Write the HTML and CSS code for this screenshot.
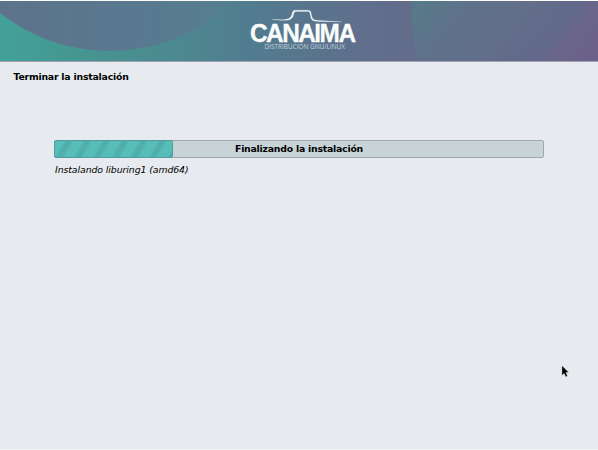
FILE: index.html
```html
<!DOCTYPE html>
<html lang="es">
<head>
<meta charset="utf-8">
<title>Canaima</title>
<link rel="stylesheet" href="styles.css">
</head>
<body>
<header class="banner">
<svg class="banner-art" width="598" height="60" viewBox="0 1 598 60">
<defs>
<linearGradient id="base" x1="0" x2="1"><stop offset="0" stop-color="#43a19a"/><stop offset=".13" stop-color="#459690"/><stop offset=".3" stop-color="#4d8890"/><stop offset=".42" stop-color="#517c8f"/><stop offset=".55" stop-color="#5c728c"/><stop offset=".68" stop-color="#636c8b"/><stop offset="1" stop-color="#636c8b"/></linearGradient>
<linearGradient id="disc" gradientUnits="userSpaceOnUse" x1="0" y1="0" x2="240" y2="0"><stop offset="0" stop-color="#5d738a"/><stop offset=".5" stop-color="#59788f"/><stop offset="1" stop-color="#567f91"/></linearGradient>
<linearGradient id="right" gradientUnits="userSpaceOnUse" x1="430" y1="-10" x2="560" y2="100"><stop offset="0" stop-color="#577a8a"/><stop offset=".25" stop-color="#60718a"/><stop offset=".5" stop-color="#626e8a"/><stop offset=".72" stop-color="#62698a"/><stop offset=".83" stop-color="#6b658a"/><stop offset="1" stop-color="#6b6189"/></linearGradient>
</defs>
<rect y="1" width="598" height="60" fill="url(#base)"/>
<circle cx="110" cy="-127" r="178" fill="url(#disc)"/>
<path d="M412 1Q410 32 418 61H598V1Z" fill="url(#right)"/>
<path class="tepui" d="M272 19.300C283 20.300 289.500 20 291.300 16C292.500 12 292.500 10.200 296 10.200H307.500C311.500 10.200 311 13 312 17C313 20 315 20.300 320 20.600L342 21.800L320 21.500C314 21.300 311.500 21 310.700 17C310 13 310 11.500 307.500 11.500H296.500C294 11.500 294 13 293 16.500C291 21.300 283 20.800 272 19.300Z"/>
<text class="brand" x="250" y="42" textLength="104.500" lengthAdjust="spacingAndGlyphs">CANAIMA</text>
<text class="tagline" x="264.500" y="48.500" textLength="80.500" lengthAdjust="spacingAndGlyphs">DISTRIBUCIÓN GNU/LINUX</text>
</svg>
</header>
<main class="content">
<h1 class="title">Terminar la instalación</h1>
<section class="progress">
<div class="bar"><div class="fill"></div><span class="label">Finalizando la instalación</span></div>
<p class="status">Instalando liburing1 (amd64)</p>
</section>
</main>
<svg class="pointer" width="9" height="13" viewBox="0 0 9 13"><path d="M.9 .5V10.500L3.100 8.500L4.900 12L6.500 11L5 7.500H7.900Z" fill="#000" stroke="#f7f9fa" stroke-width=".4"/></svg>
</body>
</html>
```
FILE: styles.css
```css
* { box-sizing: border-box; }
body {
  margin: 0;
  height: 450px;
  overflow: hidden;
  background: #e7ebef;
  color: #000;
  font-family: "DejaVu Sans", sans-serif;
  font-size: 9.33px;
  border-top: 1px solid #fbfcfc;
  border-bottom: 1px solid #f2f3f4;
}
.banner { height: 61px; border-bottom: 1px solid #a09fb4; }
.banner-art { display: block; }
.tepui { fill: #f5f9fa; stroke: #f5f9fa; stroke-width: .2; }
.brand {
  font: bold 25.5px "Liberation Sans", sans-serif;
  letter-spacing: -1.6px;
  fill: #fafcfc;
  stroke: #fafcfc;
  stroke-width: .3;
}
.tagline {
  font: 6.6px "Open Sans", sans-serif;
  fill: #c5d3dc;
}
.content { padding: 9px 54px 0; }
.title {
  margin: 0 0 0 -40.5px;
  font-size: 9.33px;
  line-height: 12px;
  letter-spacing: -.21px;
}
.progress { margin-top: 57px; }
.bar {
  display: grid;
  width: 490px;
  height: 18px;
  border: 1px solid #9dabb1;
  border-radius: 2px;
  background: #c8d3d8;
}
.fill, .label { grid-area: 1 / 1; }
.fill {
  width: 119px;
  height: 18px;
  margin: -1px;
  border: 1px solid #539c9e;
  border-radius: 2px;
  background: repeating-linear-gradient(120deg, #56bdb8 0 8px, #50aeab 10px 14px, #56bdb8 16.2px);
}
.label {
  line-height: 16px;
  text-align: center;
  font-weight: bold;
  letter-spacing: -.22px;
}
.status {
  margin: 6px 0 0 1px;
  line-height: 12px;
  font-style: italic;
  letter-spacing: -.08px;
}
.pointer { position: absolute; left: 561px; top: 365px; }
```
